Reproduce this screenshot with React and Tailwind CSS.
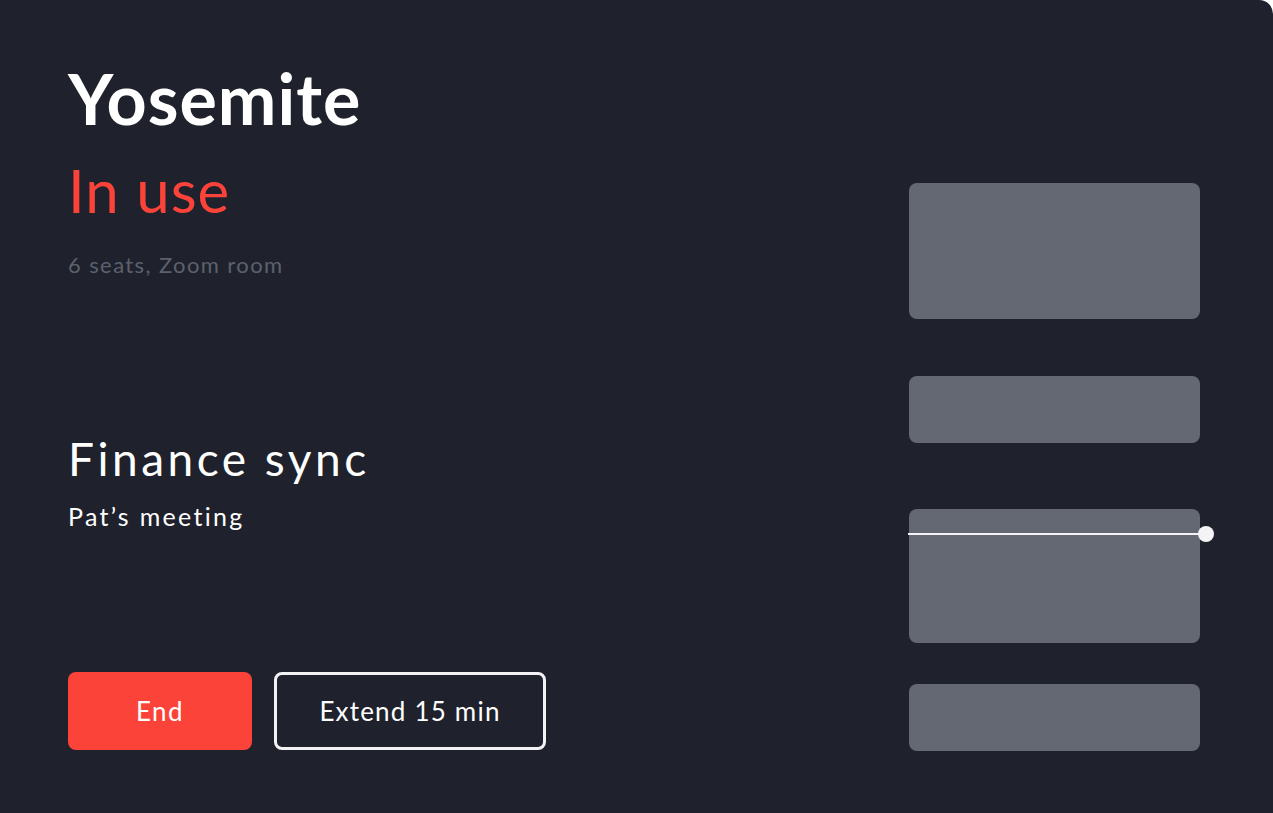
export default function App() {
  const font = { fontFamily: "Lato, 'Noto Sans', sans-serif" };

  return (
    <div className="h-[813px] w-[1273px] overflow-hidden bg-white" style={font}>
      <div className="flex h-full w-full justify-between rounded-tr-[14px] bg-[#1f222d] pl-[68px] pr-[73px]">
        <div className="flex flex-col pt-[58px]">
          <h1 className="text-[70px] font-bold leading-[80px] tracking-[1px] text-white">Yosemite</h1>
          <p className="mt-[17px] text-[60px] leading-[70px] tracking-[1px] text-[#fc4339]">In use</p>
          <p className="mt-[26px] text-[22px] leading-[28px] tracking-[1.4px] text-[#5c616d]">6 seats, Zoom room</p>

          <h2 className="mt-[152px] text-[46px] leading-[56px] tracking-[3.5px] text-white">Finance sync</h2>
          <p className="mt-[13px] text-[25px] leading-[32px] tracking-[2.3px] text-white">Pat’s meeting</p>

          <div className="mt-[140px] flex gap-[22px]">
            <button className="h-[78px] w-[184px] rounded-[8px] bg-[#fc4339] text-[26px] tracking-[1.5px] text-white">
              End
            </button>
            <button className="h-[78px] w-[272px] rounded-[8px] border-[3px] border-[#f2f2f4] text-[26px] tracking-[1.2px] text-white">
              Extend 15 min
            </button>
          </div>
        </div>

        <div className="flex w-[291px] flex-col pt-[183px]">
          <div className="h-[136px] rounded-[8px] bg-[#636873]" />
          <div className="mt-[57px] h-[67px] rounded-[8px] bg-[#636873]" />
          <div className="relative mt-[66px] h-[134px] rounded-[8px] bg-[#636873]">
            <div className="absolute left-[-1px] right-[-6px] top-[24px] h-[2px] bg-[#f4f4f6]" />
            <div className="absolute right-[-14px] top-[17px] h-[16px] w-[16px] rounded-full bg-[#f4f4f6]" />
          </div>
          <div className="mt-[41px] h-[67px] rounded-[8px] bg-[#636873]" />
        </div>
      </div>
    </div>
  );
}
